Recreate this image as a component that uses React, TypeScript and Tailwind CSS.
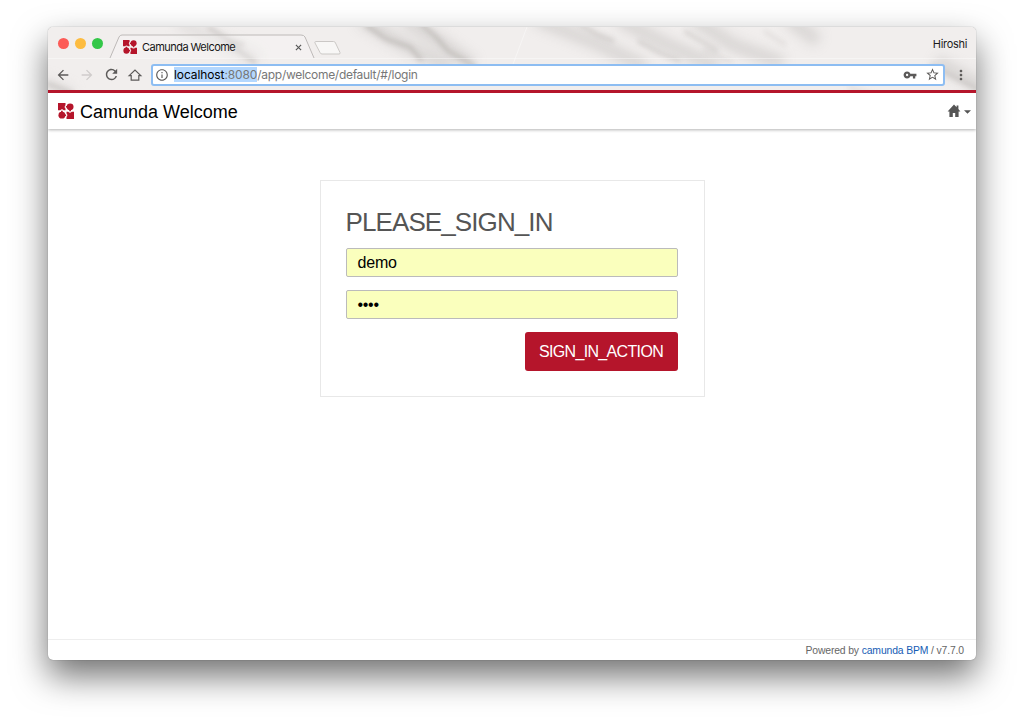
import type { ReactNode } from 'react';
import { MdArrowBack, MdArrowForward, MdInfoOutline, MdMoreVert, MdRefresh, MdStarBorder, MdVpnKey } from 'react-icons/md';

function CamundaLogo({ className }: { className: string }) {
  return (
    <svg viewBox="0 0 32 32" className={className} fill="#b5152b">
      <path d="M0 0h15v4.500a4 4 0 0 0 0 6.500v3.500h-3.500a4.500 4.500 0 0 0-7 0H0z" />
      <path d="M32 32H17v-4.500a4 4 0 0 0 0-6.500v-3.500h3.500a4.500 4.500 0 0 0 7 0H32z" />
      <circle cx="24.200" cy="7.700" r="6.900" />
      <path d="M15.800 6.200h4v3h-4zM22.500 13h3.400v3.600h-3.400z" />
      <circle cx="7.800" cy="24.300" r="6.900" />
      <path d="M12.200 22.800h4v3h-4zM6.100 15.400h3.400V19H6.100z" />
    </svg>
  );
}

// Marble theme behind the tab strip and the toolbar
function Marble() {
  return (
    <svg viewBox="0 0 928 63" preserveAspectRatio="none" className="absolute inset-0 h-full w-full">
      <defs>
        <filter id="soft" x="-20%" y="-40%" width="140%" height="180%">
          <feGaussianBlur stdDeviation="6" />
        </filter>
        <filter id="fine" x="-20%" y="-40%" width="140%" height="180%">
          <feGaussianBlur stdDeviation="2.4" />
        </filter>
      </defs>
      <rect width="928" height="63" fill="#f1eeed" />
      <g filter="url(#soft)" fill="none" stroke="#c8c5c3" strokeWidth="13" opacity="0.6">
        <path d="M312-8l40 24 50 24M355-8l36 22 34 24" />
        <path d="M488-8l60 24 50 24M570-8l45 24 55 24" />
        <path d="M645-8l40 26 50 18M740-8l30 22M888 34l50 28" />
        <path d="M-5 55l30 14M130-5l80 38" stroke="#dad7d5" />
      </g>
      <g filter="url(#fine)" fill="none" stroke="#a39e9a" strokeWidth="3.500" opacity="0.5">
        <path d="M318-2l20 14 24 8 12 14M372-4l16 14 12 14 28 16" />
        <path d="M530-4l20 12 16 6M590 14l22 12 20 8M636 4l34 20" opacity="0.7" />
        <path d="M160 0l22 14 14 4M180 16l28 20M-2 56l26 10M883 38l50 26" opacity="0.8" />
        <path d="M655 22l30 14M716 4l22 14M800 60l30 10" opacity="0.4" />
      </g>
      <path d="M479 0l-15 40" stroke="#fff" opacity="0.4" />
    </svg>
  );
}

function TabStrip() {
  return (
    <div className="relative flex h-[31px]">
      <div className="flex gap-[6px] pt-[11px] pl-[10px]">
        <span className="size-[11px] rounded-full bg-[#fc5b57]" />
        <span className="size-[11px] rounded-full bg-[#fdbc40]" />
        <span className="size-[11px] rounded-full bg-[#33c748]" />
      </div>
      <div className="relative ml-[6px] h-[31px] w-[208px]">
        <svg viewBox="0 0 208 31" className="absolute inset-0 h-full w-full">
          <path d="M1 31L10 10q1-2 3-2h179q3 0 4 2l9 21" fill="#fff" fillOpacity="0.22" stroke="#bdbab8" strokeWidth="1" />
        </svg>
        <div className="relative flex h-full items-center pt-[9px] pl-[14px]">
          <CamundaLogo className="size-[14px]" />
          <span className="ml-[5px] text-[11px] leading-none tracking-[-0.53px] whitespace-nowrap text-[#161616]">
            Camunda Welcome
          </span>
          <svg viewBox="0 0 8 8" className="mr-[15px] ml-auto size-[7px]" stroke="#555" strokeWidth="1.3">
            <path d="M1 1l6 6M7 1L1 7" />
          </svg>
        </div>
      </div>
      <svg viewBox="0 0 30 15" className="mt-[13px] -ml-[4px] h-[15px] w-[30px]">
        <path d="M2.500 1.500h18q1.500 0 2 1.500l4.500 9.500q.5 1.500-1 1.500H9q-1.500 0-2-1.500L2 3q-.5-1.500.5-1.500z" fill="#f8f7f6" stroke="#cbc8c6" />
      </svg>
      <span className="mt-[11px] mr-[9px] ml-auto text-[11px] leading-3 tracking-[-0.32px] text-[#1c1c1c]">Hiroshi</span>
    </div>
  );
}

function Toolbar() {
  return (
    <div className="relative flex h-8 items-center border-t border-white/40 text-[#5c5a59]">
      <MdArrowBack className="ml-[7px] size-4" />
      <MdArrowForward className="ml-2 size-4 text-[#cfcccb]" />
      <MdRefresh className="ml-2 size-[17px]" />
      <svg viewBox="0 0 16 16" className="ml-[7px] size-4" fill="none" stroke="currentColor" strokeWidth="1.2">
        <path d="M4.200 8.600v4.600h7.600V8.600h2L8 3 2.200 8.600z" />
      </svg>
      <div className="ml-2 flex h-[22px] w-[794px] items-center rounded-[3px] border-2 border-[#8dbdf2] bg-white">
        <MdInfoOutline className="ml-[2px] size-[14px]" />
        <div className="ml-[5px] text-[12px] leading-[15px] tracking-[-0.3px] whitespace-nowrap text-[#777]">
          <span className="inline-block bg-[#b3d7fe] tracking-[-0.1px]">
            <span className="text-black">localhost</span>:8080
          </span>
          /app/welcome/default/#/login
        </div>
        <MdVpnKey className="mr-[8px] ml-auto size-[14px]" />
        <MdStarBorder className="mr-[3px] size-[15px]" />
      </div>
      <MdMoreVert className="ml-[8px] size-4" />
    </div>
  );
}

function AppHeader() {
  return (
    <header className="flex h-[39px] items-center border-t-[3px] border-[#b5152b] bg-white pr-[5px] pl-[10px] shadow-[0_1px_3px_rgba(0,0,0,0.3)]">
      <CamundaLogo className="size-4" />
      <h1 className="mt-[2px] ml-[6px] text-[18px] leading-none text-black">Camunda Welcome</h1>
      <svg viewBox="0 0 14 14" className="ml-auto size-[14px]" fill="#555">
        <path d="M7 .6L.6 7.400h1.800V13h3.400V9h2.400v4h3.400V7.400h1.800L11.400 5V1.500H9.600v1.700z" />
      </svg>
      <svg viewBox="0 0 8 4" className="mt-[2px] ml-[3px] h-[4px] w-[7px]" fill="#555">
        <path d="M0 0h8L4 4z" />
      </svg>
    </header>
  );
}

function Field({ children }: { children: ReactNode }) {
  return (
    <div className="flex h-[29px] items-center rounded-[2px] border border-[#bbb] bg-[#faffbd] pl-[11px] text-[16px] leading-none tracking-[-0.2px] text-black">
      {children}
    </div>
  );
}

function SignIn() {
  return (
    <form className="mx-auto mt-[51px] h-[217px] w-[385px] border border-[#e8e8e8] px-[26px] pt-[25px]">
      <h2 className="-ml-px text-[26px] leading-8 tracking-[-0.9px] text-[#555]">PLEASE_SIGN_IN</h2>
      <div className="mt-[10px] -ml-px flex flex-col gap-[13px]">
        <Field>demo</Field>
        <Field>
          <span className="tracking-[-0.3px]">••••</span>
        </Field>
        <button type="button" className="h-[39px] w-[153px] self-end rounded-[3px] bg-[#b5152b] text-[16px] tracking-[-0.66px] text-white">
          SIGN_IN_ACTION
        </button>
      </div>
    </form>
  );
}

export default function App() {
  return (
    <div className="h-[728px] w-[1024px] overflow-hidden bg-white px-12 pt-[27px] font-['Liberation_Sans',Arial,sans-serif]">
      <div className="flex h-[633px] flex-col overflow-hidden rounded-[5px] bg-white shadow-[0_0_1px_rgba(0,0,0,0.5),0_16px_34px_rgba(0,0,0,0.56)]">
        <div className="relative h-[63px] shrink-0 font-[Inter,Roboto,sans-serif]">
          <Marble />
          <TabStrip />
          <Toolbar />
        </div>
        <AppHeader />
        <main className="flex-1">
          <SignIn />
        </main>
        <footer className="flex h-[21px] items-center justify-end border-t border-[#eee] pt-px pr-[12px] text-[10.400px] tracking-[-0.14px] text-[#666]">
          <p className="whitespace-pre">
            Powered by <a className="text-[#155cb5]">camunda BPM</a> / v7.7.0
          </p>
        </footer>
      </div>
    </div>
  );
}
